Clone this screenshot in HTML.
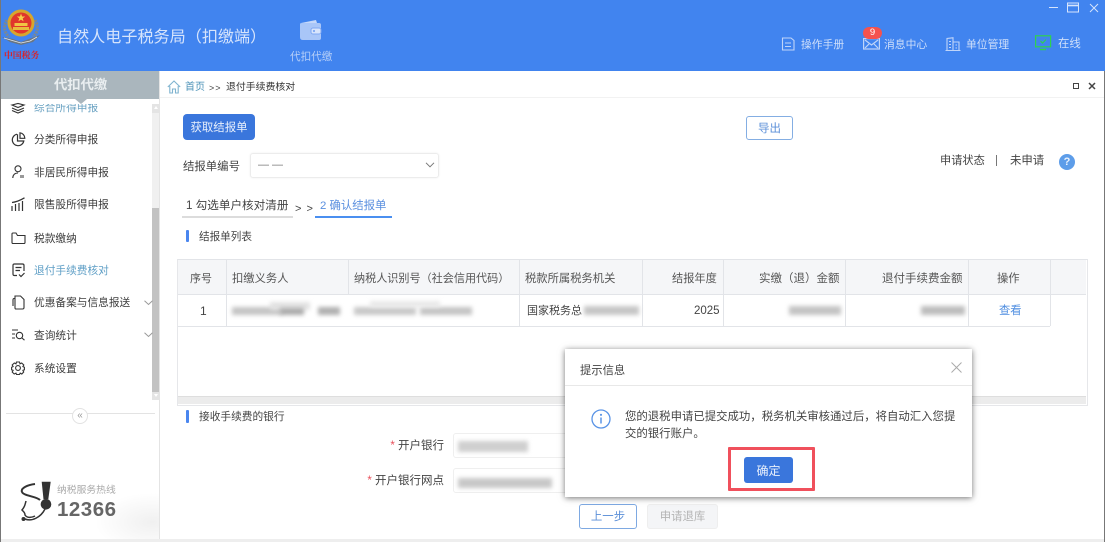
<!DOCTYPE html>
<html lang="zh-CN">
<head>
<meta charset="utf-8">
<title>自然人电子税务局（扣缴端）</title>
<style>
html,body{margin:0;padding:0;width:1105px;height:542px;overflow:hidden;background:#fff}
body{font-family:"Liberation Sans","Noto Sans CJK SC",sans-serif;position:relative;color:#444}
#r{position:absolute;left:0;top:0;width:1105px;height:542px;overflow:hidden;filter:blur(.3px)}
.a{position:absolute}
.t{position:absolute;white-space:nowrap;line-height:16px;height:16px;font-size:11px;transform:translateY(1px)}
.m{font-size:10.7px;color:#3c3c3c;left:34px}
.b{position:absolute;background:#bdbdbd;filter:blur(2px)}
.v{position:absolute;width:1px;background:#e2e4e8}
.h{position:absolute;height:1px;background:#e2e4e8}
svg{position:absolute;overflow:visible}
.w{color:#cfdffa}
</style>
</head>
<body>
<div id="r">
<!-- header -->
<div class="a" style="left:0;top:0;width:1105px;height:71px;background:#4184ef"></div>
<div class="a" style="left:0;top:0;width:1px;height:542px;background:#777"></div>
<div class="a" style="left:1104px;top:71px;width:1px;height:471px;background:#777"></div>
<!-- logo -->
<svg style="left:0;top:0" width="44" height="48" viewBox="0 0 44 48" fill="none">
 <path d="M7 20C3 26 4 32 9 37" stroke="#7d8890" stroke-width="3" stroke-dasharray="2 1"/>
 <path d="M35 20C39 26 38 32 33 37" stroke="#7d8890" stroke-width="3" stroke-dasharray="2 1"/>
 <path d="M2 37L13 39 21 42 29 39 40 35 33 42 21 45 10 42Z" fill="#6b7680"/>
 <path d="M4 38L14 41 21 43 30 41 37 37" stroke="#dfe6ee" stroke-width=".8"/>
 <circle cx="21" cy="23" r="13.500" fill="#d7a62c"/>
 <circle cx="21" cy="23" r="10.500" fill="#e0372b"/>
 <path d="M21 13.500l1.100 3h3.100l-2.500 1.900.9 3-2.600-1.800-2.600 1.800.9-3-2.500-1.900h3.100z" fill="#f5d04a"/>
 <rect x="14.500" y="23" width="13" height="3" fill="#f0c544"/>
 <rect x="13" y="27" width="16" height="3" fill="#e8bb3c"/>
</svg>
<div class="t" style="left:4px;top:46px;font-size:8.800px;color:#d8232a;font-weight:bold;font-family:'Noto Serif CJK SC',serif">中国税务</div>
<div class="t" style="left:57px;top:26px;height:20px;line-height:20px;font-size:16.100px;color:#d6e4fc">自然人电子税务局（扣缴端）</div>
<!-- wallet -->
<svg style="left:299px;top:19px" width="24" height="22" viewBox="0 0 24 22">
 <path d="M2 4 L17 1 L18 4Z" fill="#c5d8fa"/>
 <path d="M1 5 Q1 4 3 4 H20 Q22 4 22 6 V19 Q22 21 20 21 H4 Q1 21 1 18Z" fill="#a9c6f8"/>
 <rect x="12" y="9" width="10" height="6" rx="2" fill="#d8e5fc" stroke="#7fa8f2" stroke-width="1"/>
 <circle cx="15" cy="12" r="1.100" fill="#7fa8f2"/>
</svg>
<div class="t" style="left:290px;top:48px;font-size:10.600px;color:#b6cff8">代扣代缴</div>
<!-- window controls -->
<svg style="left:1045px;top:0" width="58" height="16" fill="none" stroke="#d6e4fc" stroke-width="1">
 <path d="M4 7.500H13"/>
 <rect x="22.500" y="3" width="11" height="9"/><path d="M22.500 5.500H33.500" stroke-width="1.600"/>
 <path d="M45 4l8 8M53 4l-8 8"/>
</svg>
<!-- right nav -->
<svg style="left:781px;top:37px" width="15" height="14" fill="none" stroke="#c0d5f9" stroke-width="1.100">
 <path d="M1.500 1H10L13 3.500V13H1.500Z"/><path d="M4 6H10M4 9.500H10"/>
</svg>
<div class="t w" style="left:801px;top:36px;font-size:10.800px">操作手册</div>
<svg style="left:863px;top:38px" width="18" height="12" fill="none" stroke="#c0d5f9" stroke-width="1.200">
 <rect x=".6" y=".6" width="15.800" height="10.400"/><path d="M2 2L8.500 7 15 2M2 10L6 6M15 10L11 6"/>
</svg>
<div class="a" style="left:863px;top:27px;width:19px;height:12px;border-radius:6px;background:#f4524f;color:#fff;font-size:9.500px;line-height:12px;text-align:center">9</div>
<div class="t w" style="left:884px;top:36px;font-size:10.800px">消息中心</div>
<svg style="left:945px;top:37px" width="16" height="14" fill="none" stroke="#c0d5f9" stroke-width="1.100">
 <path d="M.5 13.500H15.500M2 13.500V1.500L8 .8V13.500M8 5H14V13.500M4 4.500H6M4 7.500H6M4 10.500H6M10.500 8H12M10.500 11H12"/>
</svg>
<div class="t w" style="left:966px;top:36px;font-size:10.800px">单位管理</div>
<svg style="left:1035px;top:35px" width="17" height="16" fill="none" stroke="#2fd24f" stroke-width="1.200">
 <rect x=".6" y=".8" width="15" height="11"/><path d="M5 14.500H11" stroke-width="1.400"/><path d="M5.500 6L7.600 8 11 4.500"/>
</svg>
<div class="t w" style="left:1058px;top:35px;font-size:11.400px">在线</div>

<!-- sidebar -->
<div class="a" style="left:1px;top:71px;width:159px;height:28px;background:#aab6bd"></div>
<div class="t" style="left:54px;top:75px;height:18px;line-height:18px;font-size:13.300px;font-weight:bold;color:#e9eef0">代扣代缴</div>
<div class="t m" style="top:100px;color:#6aa2c2;height:15px;line-height:15px;clip-path:inset(3px 0 0 0)">综合所得申报</div>
<div class="a" style="left:75px;top:99px;width:0;height:0;border-left:6px solid transparent;border-right:6px solid transparent;border-top:5px solid #aab6bd"></div>
<div class="a" style="left:152px;top:104px;width:8px;height:288px;background:#f0f0f0"></div>
<div class="a" style="left:152px;top:208px;width:8px;height:184px;background:#c2c2c2"></div>
<div class="a" style="left:152px;top:104px;width:8px;height:9px;background:#e4e4e4"></div>
<div class="a" style="left:154px;top:106px;width:0;height:0;border-left:2.500px solid transparent;border-right:2.500px solid transparent;border-bottom:3px solid #fff"></div>
<div class="a" style="left:152px;top:392px;width:8px;height:8px;background:#e4e4e4"></div>
<div class="a" style="left:154px;top:394px;width:0;height:0;border-left:2.500px solid transparent;border-right:2.500px solid transparent;border-top:3px solid #fff"></div>

<svg style="left:11px;top:103px" width="14" height="10" fill="none" stroke="#333" stroke-width="1.100">
 <path d="M1 2L7 .5 13 2 7 4.500ZM1 5L7 7.500 13 5M1 7.500L7 10 13 7.500"/>
</svg>
<svg style="left:11px;top:132px" width="15" height="15" fill="none" stroke="#333" stroke-width="1.200">
 <path d="M6 2.200A5.800 5.800 0 1 0 12.800 9H6.500V2.200"/><path d="M9 .8A5.500 5.500 0 0 1 13.800 6.300H9Z"/>
</svg>
<div class="t m" style="top:131px">分类所得申报</div>
<svg style="left:12px;top:165px" width="13" height="14" fill="none" stroke="#333" stroke-width="1.100">
 <circle cx="6" cy="3.800" r="3"/><path d="M.8 13C.8 9.600 3 8 6 8"/><rect x="8" y="10" width="4" height="3" fill="#999" stroke="none"/>
</svg>
<div class="t m" style="top:164px">非居民所得申报</div>
<svg style="left:11px;top:197px" width="15" height="14" fill="none" stroke="#333" stroke-width="1.200">
 <path d="M1 9V14M4.500 7V14M8 6V14M11.500 4V14M1 5.500C5 5 9 3.500 13.500 .8"/>
</svg>
<div class="t m" style="top:196px">限售股所得申报</div>
<svg style="left:11px;top:232px" width="15" height="12" fill="none" stroke="#333" stroke-width="1.100">
 <path d="M1 3V10.500Q1 11.500 2 11.500H13Q14 11.500 14 10.500V3.500H6.500L5 1H2Q1 1 1 2Z"/>
</svg>
<div class="t m" style="top:230px">税款缴纳</div>
<svg style="left:12px;top:263px" width="14" height="15" fill="none" stroke="#333" stroke-width="1.200">
 <path d="M5 12.500H2.500Q1 12.500 1 11V2.500Q1 1 2.500 1H10.500Q12 1 12 2.500V8"/><path d="M3.500 4.500H9.500M3.500 7.500H8"/><path d="M7 11.500L9 13.500 12.500 10"/>
</svg>
<div class="t m" style="top:262px;color:#5f9fc6">退付手续费核对</div>
<svg style="left:12px;top:295px" width="13" height="15" fill="none" stroke="#333" stroke-width="1.100">
 <path d="M3 1H8.500L12 4.500V12.500Q12 14 10.500 14H4Q3 14 3 13ZM3 3.500H2Q1 3.500 1 5V11"/>
</svg>
<div class="t m" style="top:294px">优惠备案与信息报送</div>
<svg style="left:144px;top:300px" width="9" height="6" fill="none" stroke="#999"><path d="M.5 .8L4.500 4.500 8.500 .8"/></svg>
<svg style="left:11px;top:329px" width="15" height="12" fill="none" stroke="#333" stroke-width="1.100">
 <path d="M1 1H7M1 5H4M1 9H4"/><circle cx="8.500" cy="6.500" r="3.200"/><path d="M11 9L13.500 11.200"/>
</svg>
<div class="t m" style="top:327px">查询统计</div>
<svg style="left:144px;top:332px" width="9" height="6" fill="none" stroke="#999"><path d="M.5 .8L4.500 4.500 8.500 .8"/></svg>
<svg style="left:11px;top:361px" width="14" height="14" fill="none" stroke="#333" stroke-width="1.100">
 <circle cx="7" cy="7" r="2.400"/>
 <path d="M5.500 1H8.500L9 2.800 10.700 2 12.800 4 11.900 5.600 13.400 6.200V8.800L11.900 9.300 12.700 11 10.800 13 9.200 12.100 8.500 13.500H5.500L5 12.100 3.200 13 1.200 11 2.100 9.300 .6 8.800V6.200L2.100 5.600 1.200 4 3.300 2 5 2.800Z"/>
</svg>
<div class="t m" style="top:360px">系统设置</div>
<div class="a" style="left:6px;top:413px;width:149px;height:1px;background:#e3e3e3"></div>
<div class="a" style="left:72px;top:408px;width:14px;height:14px;border:1px solid #e2e2e2;border-radius:50%;background:#fff;color:#999;font-size:10px;line-height:13px;text-align:center">«</div>
<div class="a" style="left:90px;top:490px;width:69px;height:49px;background:radial-gradient(ellipse at 90% 65%,#f0f0f0 0,#fff 65%)"></div>
<svg style="left:20px;top:480px" width="34" height="44" viewBox="0 0 34 44" fill="none">
 <path d="M15 4C7 5 1.700 8 1.700 11C2 16 16 16 20 20" stroke="#333" stroke-width="2"/>
 <path d="M6 21C5 25 4.500 27 2 30C4 32 5 33 5 35C7 38 11 38 15 36" stroke="#333" stroke-width="1.500"/>
 <path d="M5 39C12 42 21 37 25 29" stroke="#333" stroke-width="1.500"/>
 <circle cx="3.500" cy="39" r="2" fill="#333"/>
 <path d="M21.700 1.700H30.700L28.300 19.300H23.500Z" fill="#333"/>
 <circle cx="26" cy="24.300" r="5.300" fill="#333"/>
</svg>
<div class="t" style="left:57px;top:482px;font-size:9.800px;color:#aaa">纳税服务热线</div>
<div class="t" style="left:57px;top:496px;height:26px;line-height:26px;font-size:20.500px;font-weight:bold;color:#666;letter-spacing:.5px">12366</div>
<div class="a" style="left:159px;top:71px;width:1px;height:471px;background:#e4e4e4"></div>
<div class="a" style="left:1px;top:539px;width:1103px;height:3px;background:#eeeeee"></div>

<!-- breadcrumb -->
<svg style="left:167px;top:80px" width="14" height="14" fill="none" stroke="#7fb3cf" stroke-width="1.100">
 <path d="M.8 7L7 1 13.200 7M2.800 6V13H5.500V9H8.500V13H11.200V6"/>
</svg>
<div class="t" style="left:185px;top:79px;font-size:10px;color:#4d93b8">首页</div>
<div class="t" style="left:209px;top:79px;font-size:9px;color:#444;letter-spacing:1px">&gt;&gt;</div>
<div class="t" style="left:226px;top:79px;font-size:9.900px;color:#333">退付手续费核对</div>
<div class="a" style="left:1073px;top:83px;width:4px;height:4px;border:1.200px solid #444"></div>
<svg style="left:1088px;top:82px" width="8" height="8" fill="none" stroke="#444" stroke-width="1.500"><path d="M1 1L7 7M7 1L1 7"/></svg>
<div class="a" style="left:160px;top:97px;width:944px;height:1px;background:#f2f2f2"></div>

<!-- toolbar -->
<div class="a" style="left:183px;top:114px;width:72px;height:26px;background:#3a76dc;border-radius:4px;color:#e9f0fc;font-size:11.400px;line-height:28px;text-align:center">获取结报单</div>
<div class="a" style="left:746px;top:116px;width:45px;height:22px;border:1px solid #84aee3;border-radius:3px;color:#5b8fd8;font-size:11.500px;line-height:24px;text-align:center">导出</div>
<div class="t" style="left:183px;top:158px;font-size:11.400px;color:#444">结报单编号</div>
<div class="a" style="left:250px;top:153px;width:187px;height:23px;border:1px solid #ececec;border-radius:3px;box-shadow:0 0 2px #eee"></div>
<div class="t" style="left:258px;top:156px;font-size:11px;color:#777">— —</div>
<svg style="left:425px;top:162px" width="10" height="6" fill="none" stroke="#777"><path d="M1 .8L5 4.800 9 .8"/></svg>
<div class="t" style="left:940px;top:152px;font-size:11.200px;color:#444">申请状态</div>
<div class="a" style="left:996px;top:155px;width:1px;height:11px;background:#777"></div>
<div class="t" style="left:1010px;top:152px;font-size:11.400px;color:#444">未申请</div>
<div class="a" style="left:1059px;top:154px;width:16px;height:16px;border-radius:50%;background:#5d9de9;color:#eaf2fd;font-size:11px;font-weight:bold;line-height:16px;text-align:center">?</div>

<!-- tabs -->
<div class="t" style="left:186px;top:197px;font-size:11.600px;color:#444">1 勾选单户核对清册</div>
<div class="a" style="left:182px;top:216px;width:111px;height:2px;background:#dcdcdc"></div>
<div class="t" style="left:295px;top:200px;font-size:11px;color:#444;letter-spacing:1px">&gt; &gt;</div>
<div class="t" style="left:320px;top:197px;font-size:11.400px;color:#5a8fdf">2 确认结报单</div>
<div class="a" style="left:315px;top:216px;width:77px;height:2px;background:#4a8ff0"></div>
<div class="a" style="left:186px;top:230px;width:3px;height:12px;background:#4a86ef;border-radius:1px"></div>
<div class="t" style="left:199px;top:228px;font-size:10.600px;color:#444">结报单列表</div>

<!-- table -->
<div class="a" style="left:177px;top:259px;width:909px;height:145px;border:1px solid #e6e7ea;border-top-color:#e2e4e8;box-sizing:content-box"></div>
<div class="a" style="left:178px;top:260px;width:908px;height:34px;background:#f5f6f8"></div>
<div class="h" style="left:178px;top:294px;width:908px"></div>
<div class="h" style="left:178px;top:326px;width:872px"></div>
<div class="v" style="left:226px;top:260px;height:66px"></div>
<div class="v" style="left:348px;top:260px;height:34px"></div>
<div class="v" style="left:519px;top:260px;height:66px"></div>
<div class="v" style="left:642px;top:260px;height:66px"></div>
<div class="v" style="left:723px;top:260px;height:66px"></div>
<div class="v" style="left:845px;top:260px;height:66px"></div>
<div class="v" style="left:968px;top:260px;height:66px"></div>
<div class="v" style="left:1050px;top:260px;height:66px"></div>
<div class="a" style="left:178px;top:396px;width:908px;height:8px;background:#ececec;border-top:1px solid #dedede;box-sizing:border-box"></div>

<div class="t" style="left:190px;top:270px;font-size:11px;color:#555">序号</div>
<div class="t" style="left:232px;top:270px;font-size:11.300px;color:#555">扣缴义务人</div>
<div class="t" style="left:354px;top:270px;font-size:11.100px;color:#555">纳税人识别号（社会信用代码）</div>
<div class="t" style="left:525px;top:270px;font-size:11.300px;color:#555">税款所属税务机关</div>
<div class="t" style="left:672px;top:270px;font-size:11.200px;color:#555">结报年度</div>
<div class="t" style="left:759px;top:270px;font-size:11.500px;color:#555">实缴（退）金额</div>
<div class="t" style="left:882px;top:270px;font-size:11.500px;color:#555">退付手续费金额</div>
<div class="t" style="left:997px;top:270px;font-size:11.300px;color:#555">操作</div>

<div class="t" style="left:200px;top:302px;font-size:12px;color:#444">1</div>
<div class="b" style="left:232px;top:307px;width:50px;height:8px;background:#c4c4c4"></div>
<div class="b" style="left:270px;top:302px;width:40px;height:8px;background:#e2e2e2"></div>
<div class="b" style="left:280px;top:308px;width:24px;height:7px;background:#aaa"></div>
<div class="b" style="left:318px;top:307px;width:22px;height:8px;background:#b0b0b0"></div>
<div class="b" style="left:354px;top:307px;width:62px;height:8px;background:#c8c8c8"></div>
<div class="b" style="left:420px;top:307px;width:52px;height:8px;background:#c4c4c4"></div>
<div class="b" style="left:370px;top:301px;width:70px;height:6px;background:#e8e8e8"></div>
<div class="t" style="left:527px;top:302px;font-size:11px;color:#444">国家税务总</div>
<div class="b" style="left:584px;top:306px;width:55px;height:9px;background:#c6c6c6"></div>
<div class="t" style="left:694px;top:302px;font-size:11.500px;color:#444">2025</div>
<div class="b" style="left:789px;top:306px;width:52px;height:9px;background:#c4c4c4"></div>
<div class="b" style="left:921px;top:306px;width:44px;height:9px;background:#bdbdbd"></div>
<div class="t" style="left:999px;top:302px;font-size:11.300px;color:#4f8ee0">查看</div>

<!-- bank form -->
<div class="a" style="left:186px;top:410px;width:3px;height:13px;background:#4a86ef;border-radius:1px"></div>
<div class="t" style="left:199px;top:408px;font-size:10.700px;color:#444">接收手续费的银行</div>
<div class="t" style="right:661px;top:437px;font-size:11.500px;color:#444"><span style="color:#e8505b">*</span> 开户银行</div>
<div class="a" style="left:453px;top:433px;width:120px;height:23px;border:1px solid #efefef;border-radius:3px"></div>
<div class="b" style="left:458px;top:441px;width:70px;height:11px;background:#cfcfcf"></div>
<div class="t" style="right:661px;top:472px;font-size:11.500px;color:#444"><span style="color:#e8505b">*</span> 开户银行网点</div>
<div class="a" style="left:453px;top:468px;width:120px;height:23px;border:1px solid #efefef;border-radius:3px"></div>
<div class="b" style="left:458px;top:478px;width:94px;height:10px;background:#c8c8c8"></div>
<div class="a" style="left:579px;top:504px;width:56px;height:23px;border:1px solid #7ea9e2;border-radius:3px;color:#5b8fd8;font-size:11.400px;line-height:25px;text-align:center">上一步</div>
<div class="a" style="left:647px;top:504px;width:69px;height:23px;border:1px solid #eeeeee;border-radius:3px;background:#f4f5f7;color:#b4b4b4;font-size:11.400px;line-height:25px;text-align:center">申请退库</div>

<!-- dialog -->
<div class="a" style="left:565px;top:349px;width:407px;height:148px;background:#fff;box-shadow:0 1px 6px rgba(0,0,0,.55)"></div>
<div class="t" style="left:580px;top:362px;font-size:11.300px;color:#444">提示信息</div>
<svg style="left:951px;top:362px" width="11" height="11" fill="none" stroke="#aaa" stroke-width="1"><path d="M.5 .5L10.500 10.500M10.500 .5L.5 10.500"/></svg>
<div class="a" style="left:565px;top:385px;width:407px;height:1px;background:#e8e8e8"></div>
<svg style="left:591px;top:409px" width="20" height="20" fill="none" stroke="#5a94e6" stroke-width="1.300">
 <circle cx="10" cy="10" r="9"/><path d="M10 8.500V14.500" stroke-width="1.500"/><circle cx="10" cy="5.800" r=".8" fill="#5a94e6" stroke-width=".6"/>
</svg>
<div class="t" style="left:625px;top:408px;font-size:11.400px;color:#444">您的退税申请已提交成功，税务机关审核通过后，将自动汇入您提</div>
<div class="t" style="left:625px;top:425px;font-size:11.400px;color:#444">交的银行账户。</div>
<div class="a" style="left:728px;top:447px;width:81px;height:38px;border:3px solid #f0505c;border-radius:1px"></div>
<div class="a" style="left:744px;top:457px;width:49px;height:26px;background:#3a76dc;border-radius:3px;color:#e9f0fc;font-size:12px;line-height:28px;text-align:center">确定</div>
</div>
</body>
</html>
